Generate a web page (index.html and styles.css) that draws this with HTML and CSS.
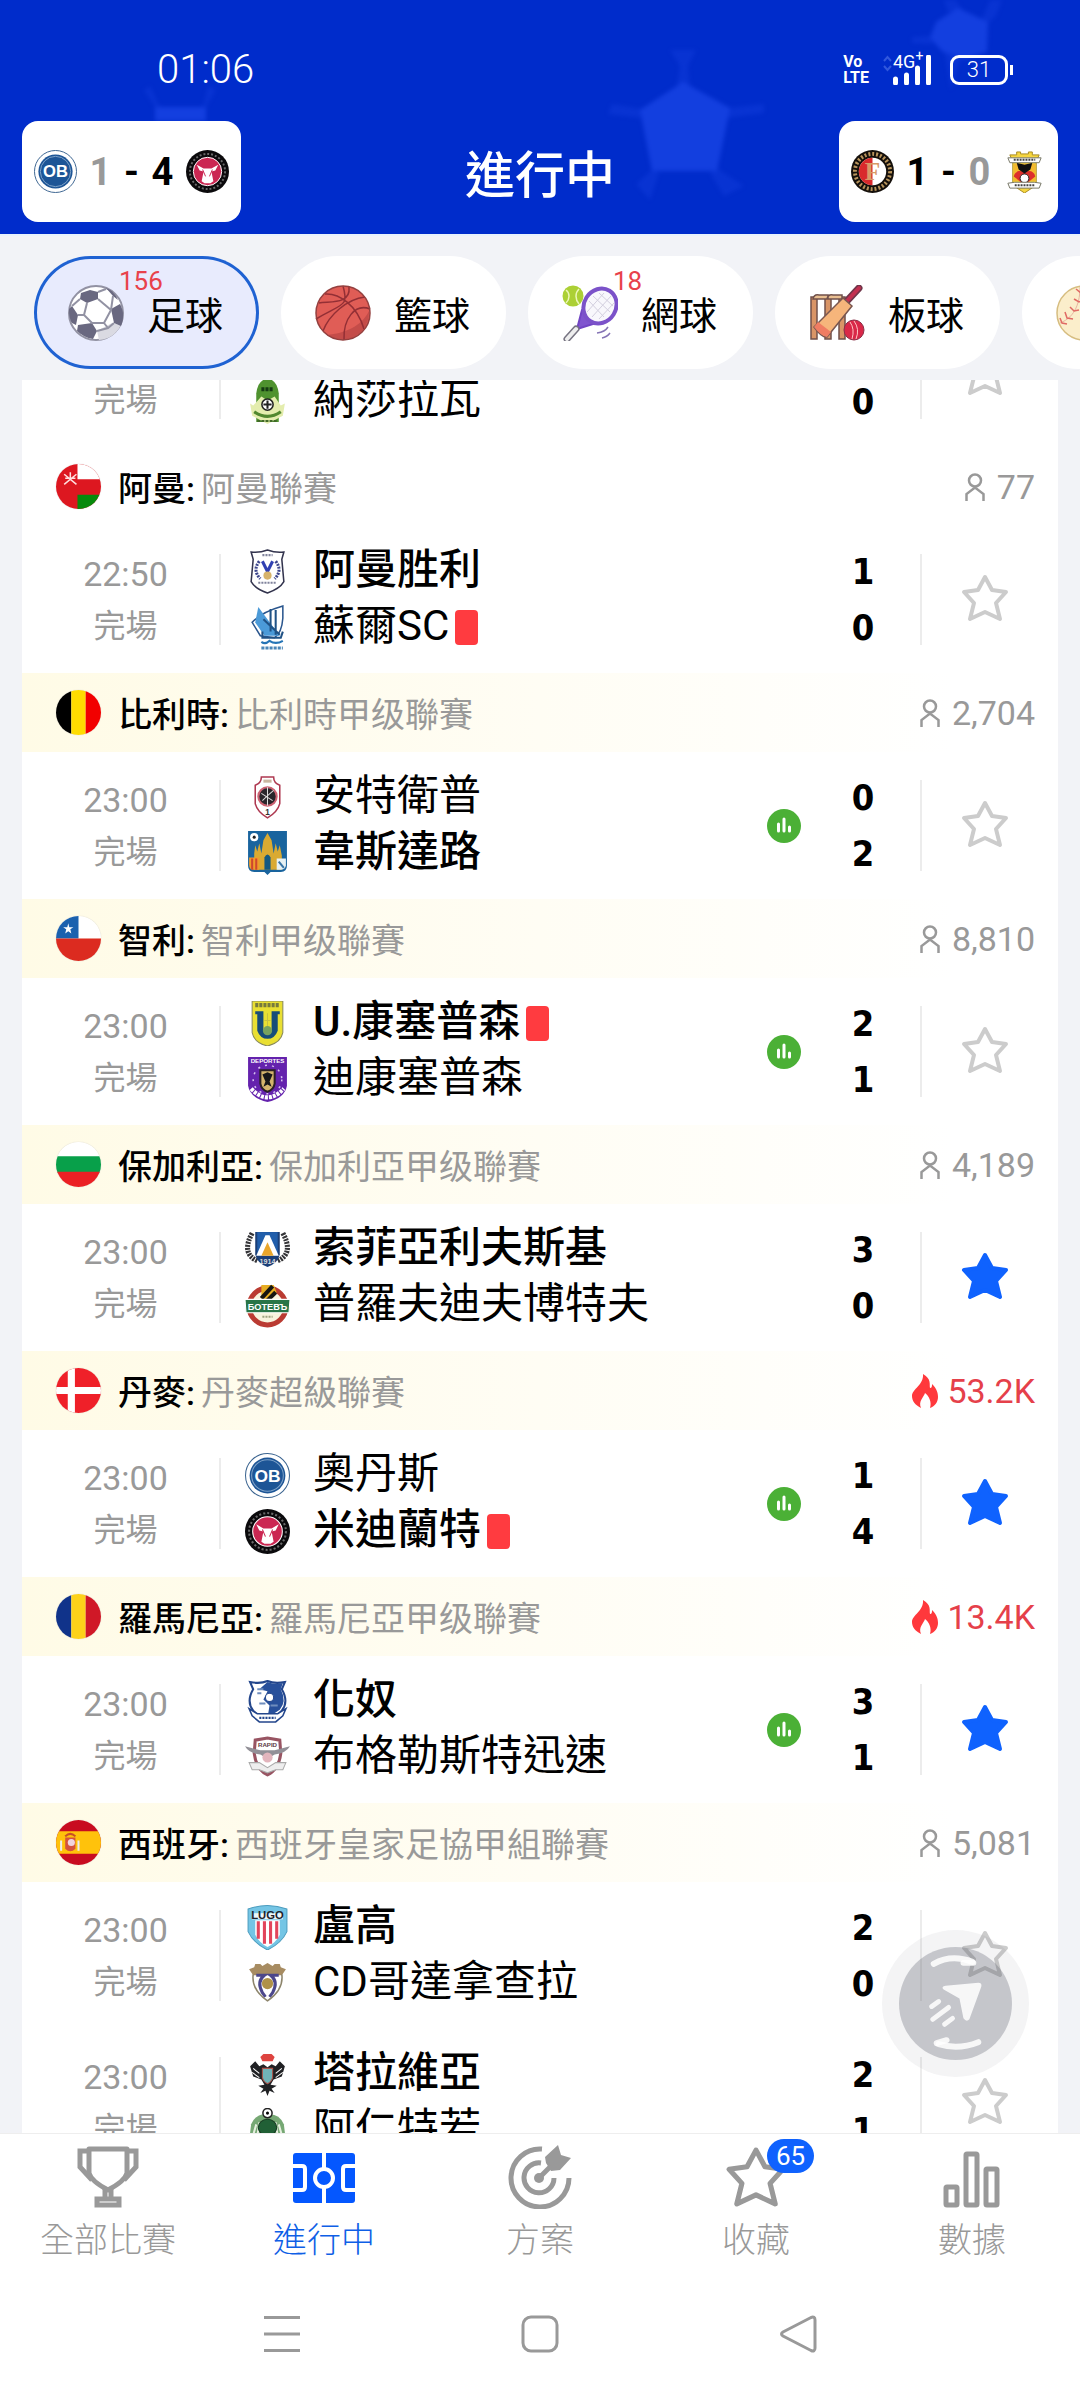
FILE: index.html
```html
<!DOCTYPE html>
<html lang="zh-Hant">
<head>
    <meta charset="UTF-8">
    <meta name="viewport" content="width=device-width, initial-scale=1.0">
    <title>進行中</title>
    <link rel="stylesheet" href="styles.css">
</head>
<body>
    <!-- shared icons -->
    <svg class="sprite" aria-hidden="true">
        <symbol id="star" viewBox="0 0 48 48"><path d="M24 3L31 16L45 18L35 29L39 45L24 38L9 45L13 29L3 18L17 16Z" stroke-width="4" stroke-linejoin="round"/></symbol>
        <symbol id="person" viewBox="0 0 20 28"><circle cx="10" cy="7.500" r="6" fill="none" stroke="#999" stroke-width="2.500"/><path d="M1.500 28V21L10 14.500L18.500 21V28" fill="none" stroke="#999" stroke-width="2.500"/></symbol>
        <symbol id="flame" viewBox="0 0 26 34"><path d="M11 0C20 5 17 11 18 14C20 14 20 12 20 10C25 15 26 19 26 23C26 28 23 32 18 34C20 28 17 22 13 19C12 23 6 27 9 34C3 31 0 27 0 22C0 15 12 11 11 0Z" fill="#ff383c"/></symbol>
        <symbol id="chart" viewBox="0 0 34 34"><circle cx="17" cy="17" r="17" fill="#4bb036"/><path d="M11.500 15V22M17 10V22M22.500 18V22" stroke="#fff" stroke-width="3" stroke-linecap="round"/></symbol>
        <symbol id="ob" viewBox="0 0 44 44"><circle cx="22" cy="22" r="21.500" fill="#fff" stroke="#3b6490"/><circle cx="22" cy="22" r="17.500" fill="#1d5596"/><circle cx="22" cy="22" r="15.500" fill="none" stroke="#7fa3c9" stroke-width="1"/><text x="22" y="28" font-size="17" class="crest-text" fill="#fff">OB</text></symbol>
        <symbol id="fcm" viewBox="0 0 44 44"><circle cx="22" cy="22" r="22" fill="#0b0a0c"/><circle cx="22" cy="22" r="18" fill="none" stroke="#aaa" stroke-width="2" stroke-dasharray="2 2" stroke-opacity=".6"/><circle cx="22" cy="22" r="14.500" fill="#cb2752" stroke="#fff"/><path d="M11 15L18 19H26L33 15L30 21L26 22L28 32L25 34H19L16 32L18 22L14 21Z" fill="#fff"/><path d="M17 20L20 27M27 20L24 27" stroke="#cb2752"/></symbol>
    </svg>

    <header class="header">
        <svg class="header-bg" viewBox="0 0 1080 234" preserveAspectRatio="xMidYMin slice" aria-hidden="true">
            <g fill="#1a45e6" fill-opacity=".75">
                <path d="M683 82L730 108L717 171H652L640 110Z"/>
                <path d="M958 8L988 22L987 52L965 59L943 52L930 38L936 22Z"/>
                <path d="M155 107H206V121H155Z"/>
            </g>
            <g fill="#1a45e6" fill-opacity=".3">
                <path d="M677 85L680 66L670 50H696L688 66L690 86ZM640 118L608 114L612 104L642 109ZM728 108L764 104V113L727 118ZM652 170L659 173L650 200L636 184ZM710 173L718 169L744 186L724 196Z"/>
                <path d="M948 12L944 0H956L962 10ZM982 19L990 0H1002L996 16L988 23ZM930 36L912 37V43L932 44ZM945 53L951 90L961 57Z"/>
                <path d="M155 107L144 90L150 86L160 107ZM203 107L208 86L216 90L206 107Z"/>
            </g>
        </svg>
        <div class="status-bar">
            <time class="clock">01:06</time>
            <div class="status-icons">
                <span class="volte">Vo<br>LTE</span>
                <span class="signal">
                    <span class="network">4G<sup>+</sup></span>
                    <svg width="49" height="30" viewBox="0 0 49 30" aria-hidden="true"><path d="M1 6L4.500 2L8 6M1 11L4.500 15L8 11" fill="none" stroke="#3158dd" stroke-width="2"/><path d="M12.500 24V28M23.500 20V28M34.500 13V28M45.500 2V28" stroke="#fff" stroke-width="5" stroke-linecap="round"/></svg>
                </span>
                <span class="battery">31</span>
            </div>
        </div>
        <div class="title-bar">
            <a class="mini-score" href="#odense">
                <svg class="mini-logo"><use href="#ob"/></svg>
                <span class="mini-lost">1</span><span>-</span><span>4</span>
                <svg class="mini-logo"><use href="#fcm"/></svg>
            </a>
            <h1 class="title">進行中</h1>
            <a class="mini-score" href="#feyenoord">
                <svg class="mini-logo" viewBox="0 0 44 44"><circle cx="22" cy="22" r="22" fill="#15100b"/><circle cx="22" cy="22" r="18" fill="none" stroke="#b8945c" stroke-width="4" stroke-dasharray="2 2"/><circle cx="22" cy="22" r="14" fill="#fff"/><path d="M22 8A14 14 0 0 0 22 36Z" fill="#d92a2c"/><text x="22" y="31" font-size="26" class="crest-serif" fill="#d79a67">F</text></svg>
                <span>1</span><span>-</span><span class="mini-lost">0</span>
                <svg class="mini-logo" viewBox="0 0 44 44"><path d="M7 5H14V2H18V4H26V2H30V5H37L34 12V36L22 44L10 36V12Z" fill="#f6d640" stroke="#a88a20"/><path d="M11 14H33V32H11Z" fill="#f4b92e"/><path d="M22 23C27 20 32 22 33 27L22 36L11 27C12 22 17 20 22 23Z" fill="#dd2f2c"/><path d="M22 15L30 13L28 20L22 24L16 20L14 13Z" fill="#111"/><circle cx="22" cy="29" r="4.500" fill="#fff" stroke="#222"/><path d="M5 8H39L37 13H7ZM5 34L12 33H32L39 34L37 39H7Z" fill="#fff" stroke="#776" stroke-width="1"/><path d="M12 36H32M11 10H33" stroke="#444" stroke-width="2" stroke-dasharray="2 1"/></svg>
            </a>
        </div>
    </header>

    <nav class="sports">
        <button class="sport sport-active">
            <svg class="sport-icon" viewBox="0 0 56 56" aria-hidden="true"><circle cx="28" cy="28" r="27" fill="#fff" stroke="#9292a3" stroke-width="2"/><path d="M31 55C42 54 48 49 53 40L44 38L29 46Z" fill="#dadae2"/><g fill="#696880"><path d="M13 8L22 5L30 7L30 14L19 18L12 14Z"/><path d="M1 24L4 21L10 30L8 40L4 38C1 33 1 28 1 24Z"/><path d="M10 40L24 38L29 46L25 54C19 53 13 50 9 46Z"/><path d="M43 24L52 19C56 26 56 34 53 41L46 38Z"/><path d="M38 3C44 5 48 10 50 15L45 11Z"/></g><path d="M19 18L16 30L24 38H36L43 25L30 14M30 7L38 4M10 30H16M36 38L40 43M43 25L45 11M12 14L4 21M29 46L40 43L46 38" fill="none" stroke="#9292a3" stroke-width="2"/></svg>
            <span class="sport-count">156</span>
            <span>足球</span>
        </button>
        <button class="sport">
            <svg class="sport-icon" viewBox="0 0 56 56" aria-hidden="true"><circle cx="28" cy="28" r="27" fill="#e05d56"/><path d="M54 26A27 27 0 0 1 12 50C30 48 46 42 54 26Z" fill="#c44c49"/><path d="M10 9C24 8 42 20 49 44M34 2C36 20 14 16 4 18M28 1C34 22 28 18 1 34M50 12C32 14 14 30 8 46M55 24C40 18 28 34 29 55" fill="none" stroke="#932f35" stroke-width="1.500"/><circle cx="28" cy="28" r="27" fill="none" stroke="#94403f" stroke-width="1.500"/></svg>
            <span>籃球</span>
        </button>
        <button class="sport">
            <svg class="sport-icon" viewBox="0 0 56 56" aria-hidden="true"><circle cx="11" cy="11" r="10.500" fill="#acd035"/><path d="M4 5C8 8 8 14 4 18M17 4C13 8 13 14 17 19" fill="none" stroke="#ecf7b8" stroke-width="1.500"/><path d="M20 25L15 44L34 38Z" fill="#8055cf" stroke="#7145c4" stroke-width="2" stroke-linejoin="round"/><ellipse cx="38" cy="21" rx="16" ry="18" transform="rotate(32 38 21)" fill="#f8f7fc" stroke="#7b52c9" stroke-width="4"/><path d="M27 16L42 32M31 11L48 27M37 8L51 21M25 27L42 8M30 32L49 11M37 34L52 18" stroke="#d3cfdf"/><path d="M14 44L5 54" stroke="#777482" stroke-width="7" stroke-linecap="round"/><path d="M14 44L5 54" stroke="#eee" stroke-width="4" stroke-linecap="round"/><path d="M35 48Q43 47 46 42M40 53Q45 52 48 48" fill="none" stroke="#8574b5" stroke-width="1.500"/></svg>
            <span class="sport-count">18</span>
            <span>網球</span>
        </button>
        <button class="sport">
            <svg class="sport-icon" viewBox="0 0 56 56" aria-hidden="true"><g fill="#d99567" stroke="#70504b" stroke-width="1.500"><path d="M2 12H8V54H2ZM16 12H22V54H16ZM30 12H36V54H30Z"/><path d="M4 14Q5 9 10 10H19V14ZM18 14Q19 9 24 10H33V14Z" fill="#e9bf91"/></g><path d="M37 17L50 3" stroke="#70364a" stroke-width="7" stroke-linecap="round"/><path d="M37 17L50 3" stroke="#c33050" stroke-width="4" stroke-linecap="round"/><path d="M34 13L43 21L18 52Q13 53 5 42Z" fill="#f6b57b" stroke="#7a5750" stroke-width="1.500"/><path d="M9 37L22 47L18 52Q12 51 5 42Z" fill="#f07c62"/><circle cx="45" cy="45" r="10" fill="#d92848" stroke="#8b3048"/><path d="M41 37Q46 44 43 54M45 36Q51 44 47 54" fill="none" stroke="#ffc5c5"/></svg>
            <span>板球</span>
        </button>
        <button class="sport" aria-label="棒球">
            <svg class="sport-icon" viewBox="0 0 56 56" aria-hidden="true"><circle cx="28" cy="28" r="27" fill="#fbeecb" stroke="#d6bd80" stroke-width="1.500"/><path d="M24 2C24 16 20 32 4 38M52 20C38 28 34 40 34 54" fill="none" stroke="#e9b5a0" stroke-width="1"/><path d="M20 4L25 8L28 5M18 14L23 17L27 15M14 22L18 26L23 25M9 27L11 33L17 34M4 33L6 38L11 39" fill="none" stroke="#e06a64" stroke-width="1.500"/></svg>
        </button>
    </nav>

    <main class="list">
        <div class="list-inner">
            <article class="match">
                <div class="when"><time>&nbsp;</time><span>完場</span></div>
                <div class="teams">
                    <div class="team"></div>
                    <div class="team">
                        <svg class="logo" viewBox="0 0 44 44"><path d="M11 42V14Q13 0 22 0T33 14V42Z" fill="#4f922f"/><path d="M16 10H28" stroke="#153b12" stroke-width="4" stroke-dasharray="3 1"/><path d="M8 26L5 24L7 36L22 44L37 36L39 24L35 26L29 17L22 21L16 17Z" fill="#e4edae"/><circle cx="22" cy="25" r="5.500" fill="#fff" stroke="#222" stroke-width="1.500"/><path d="M22 21V29M18 25H26" stroke="#222" stroke-width="2"/><path d="M9 32Q22 41 35 32" fill="none" stroke="#51882f" stroke-width="3"/><path d="M12 41H32" stroke="#416a27" stroke-width="2" stroke-dasharray="3 1"/></svg>
                        納莎拉瓦
                    </div>
                </div>
                <div class="score"><span>&nbsp;</span><span>0</span></div>
                <button class="fav" aria-label="收藏"><svg><use href="#star"/></svg></button>
            </article>

            <h2 class="league league-plain">
                <svg class="flag" viewBox="0 0 44 44"><path d="M0 0H44V44H0Z" fill="#dd1720"/><path d="M21 0H44V15H21Z" fill="#fff"/><path d="M21 30H44V44H21Z" fill="#078a0c"/><path d="M8 10L20 20M20 10L8 20M14 8V15M9 14H19" stroke="#ffdede" stroke-width="1.500"/></svg>
                <span class="country">阿曼:</span> <span class="league-name">阿曼聯賽</span>
                <span class="viewers"><svg class="person"><use href="#person"/></svg>77</span>
            </h2>
            <article class="match">
                <div class="when"><time>22:50</time><span>完場</span></div>
                <div class="teams">
                    <div class="team team-win">
                        <svg class="logo" viewBox="0 0 44 44"><path d="M6 3Q14 4 22 1Q30 4 38 3L36 10L38 32Q34 39 22 43Q10 39 6 32L8 10Z" fill="#fff" stroke="#33344e" stroke-width="1.500"/><path d="M17 12L22 22L27 12" fill="none" stroke="#3040b2" stroke-width="3"/><path d="M14 12Q7 21 15 29M30 12Q37 21 29 29" fill="none" stroke="#3c458c" stroke-width="3" stroke-dasharray="2 1"/><circle cx="22" cy="26" r="4" fill="#d7b36a"/><path d="M13 33H31M17 6H27" stroke="#80839c" stroke-width="2" stroke-dasharray="2 1"/></svg>
                        阿曼胜利
                    </div>
                    <div class="team">
                        <svg class="logo" viewBox="0 0 44 44"><path d="M37 1V13Q36 27 29 32L15 30L7 17Q16 7 37 1Z" fill="#fff" stroke="#2a568e" stroke-width="1.500"/><path d="M13 2L34 30H19L10 17Z" fill="#4b9ad8"/><path d="M25 4V26M18 14L34 29M30 5V29M17 26V32H35L37 26" stroke="#205285" stroke-width="2" fill="none"/><path d="M16 36Q20 39 24 35Q30 39 37 35" fill="none" stroke="#2474b6" stroke-width="2"/><path d="M16 42H37" stroke="#4a86b8" stroke-width="3" stroke-dasharray="3 1"/></svg>
                        蘇爾SC<i class="red-card"></i>
                    </div>
                </div>
                <div class="score"><span>1</span><span>0</span></div>
                <button class="fav" aria-label="收藏"><svg><use href="#star"/></svg></button>
            </article>

            <h2 class="league">
                <svg class="flag" viewBox="0 0 44 44"><path d="M0 0H15V44H0Z"/><path d="M15 0H29V44H15Z" fill="#ffdc00"/><path d="M29 0H44V44H29Z" fill="#f20000"/></svg>
                <span class="country">比利時:</span> <span class="league-name">比利時甲级聯賽</span>
                <span class="viewers"><svg class="person"><use href="#person"/></svg>2,704</span>
            </h2>
            <article class="match">
                <div class="when"><time>23:00</time><span>完場</span></div>
                <div class="teams">
                    <div class="team">
                        <svg class="logo" viewBox="0 0 44 44"><path d="M16 2H28Q28 8 34 10V28Q32 36 22 42Q12 36 10 28V10Q16 8 16 2Z" fill="#fff" stroke="#ae3850" stroke-width="1.500"/><circle cx="22" cy="21" r="9" fill="#29262b" stroke="#cb6272" stroke-width="2"/><path d="M16 18L27 25M17 25Q22 20 28 15M22 12V30" stroke="#ddd"/><text x="22" y="39" font-size="8" class="crest-text" fill="#333">1</text><path d="M18 6H26" stroke="#cbb6a0" stroke-width="3"/></svg>
                        安特衛普
                    </div>
                    <div class="team team-win">
                        <svg class="logo" viewBox="0 0 44 44"><path d="M3 0H41V34Q41 40 35 40H25L22 43L19 40H9Q3 40 3 34Z" fill="#19649e"/><path d="M9 38V22L10 14L12 20L14 12L16 22L18 9L22 2L26 9L28 22L30 12L32 20L34 14L36 24V38Z" fill="#d9aa32"/><path d="M19 38V26Q22 20 25 26V38Z" fill="#125982"/><path d="M4 26H14V38H7Q4 37 4 33Z" fill="#f09b2b"/><path d="M7 27V38M11 27V38" stroke="#cf472e" stroke-width="2"/><path d="M31 27H40V34Q39 38 35 38H31Z" fill="#e7f2f4"/><path d="M33 30L38 36" stroke="#3975a7" stroke-width="2"/><circle cx="9" cy="6" r="4" fill="#fff"/><circle cx="9" cy="6" r="1.500" fill="#222"/></svg>
                        韋斯達路
                    </div>
                </div>
                <svg class="stats"><use href="#chart"/></svg>
                <div class="score"><span>0</span><span>2</span></div>
                <button class="fav" aria-label="收藏"><svg><use href="#star"/></svg></button>
            </article>

            <h2 class="league">
                <svg class="flag" viewBox="0 0 44 44"><path d="M0 0H44V22H0Z" fill="#fff"/><path d="M0 0H22V22H0Z" fill="#1b61ae"/><path d="M0 22H44V44H0Z" fill="#dc2b20"/><path d="M12 7L13 11H17L14 13L15 17L12 15L9 17L10 13L7 11H11Z" fill="#fff"/></svg>
                <span class="country">智利:</span> <span class="league-name">智利甲级聯賽</span>
                <span class="viewers"><svg class="person"><use href="#person"/></svg>8,810</span>
            </h2>
            <article class="match">
                <div class="when"><time>23:00</time><span>完場</span></div>
                <div class="teams">
                    <div class="team team-win">
                        <svg class="logo" viewBox="0 0 44 44"><path d="M7 0H37V31Q35 41 22 44Q9 41 7 31Z" fill="#e9df32" stroke="#88895b"/><path d="M10 4H34" stroke="#777a3d" stroke-width="4" stroke-dasharray="3 1"/><path d="M10 10H18V28Q22 34 26 28V10H34V13H32V29Q29 37 22 37T12 29V13H10Z" fill="#174c78"/><path d="M22 12V25M19 19H25" stroke="#c7c13f"/><circle cx="22" cy="29" r="4.500" fill="#77a25e"/></svg>
                        U.康塞普森<i class="red-card"></i>
                    </div>
                    <div class="team">
                        <svg class="logo" viewBox="0 0 44 44"><path d="M3 0H41V28Q39 40 22 44Q5 40 3 28Z" fill="#6422ad"/><text x="22" y="6" font-size="6" class="crest-text" fill="#fff">DEPORTES</text><path d="M15 13H29V26Q28 32 22 34Q16 32 15 26Z" fill="#d3b46c" stroke="#2b2025" stroke-width="2"/><path d="M17 17L22 15L27 17L24 24L26 29L22 27L18 29L20 24Z" fill="#171719"/><circle cx="22" cy="22" r="14" fill="none" stroke="#d6c0f0" stroke-width="1.500" stroke-dasharray="2 5"/><path d="M6 31Q22 48 38 31" fill="none" stroke="#fff" stroke-width="4" stroke-dasharray="3 1"/></svg>
                        迪康塞普森
                    </div>
                </div>
                <svg class="stats"><use href="#chart"/></svg>
                <div class="score"><span>2</span><span>1</span></div>
                <button class="fav" aria-label="收藏"><svg><use href="#star"/></svg></button>
            </article>

            <h2 class="league">
                <svg class="flag" viewBox="0 0 44 44"><path d="M0 0H44V15H0Z" fill="#fff"/><path d="M0 14H44V30H0Z" fill="#08a04a"/><path d="M0 29H44V44H0Z" fill="#eb2024"/></svg>
                <span class="country">保加利亞:</span> <span class="league-name">保加利亞甲级聯賽</span>
                <span class="viewers"><svg class="person"><use href="#person"/></svg>4,189</span>
            </h2>
            <article class="match">
                <div class="when"><time>23:00</time><span>完場</span></div>
                <div class="teams">
                    <div class="team team-win">
                        <svg class="logo" viewBox="0 0 44 44"><path d="M7 6Q-4 26 12 33M37 6Q48 26 32 33" fill="none" stroke="#343437" stroke-width="5" stroke-dasharray="2 1"/><path d="M10 5H34V27Q32 36 22 39Q12 36 10 27Z" fill="#1a3f78"/><path d="M12 5H32V28H12Z" fill="#215eab"/><path d="M20 8H24L33 28H11Z" fill="#fff"/><path d="M22 15L28 28H16Z" fill="#e9a62c"/><text x="22" y="36" font-size="7" class="crest-text" fill="#ddd">1914</text></svg>
                        索菲亞利夫斯基
                    </div>
                    <div class="team">
                        <svg class="logo" viewBox="0 0 44 44"><circle cx="22" cy="23" r="18" fill="#f7f3dd" stroke="#ba3b32" stroke-width="5"/><path d="M16 2H28L31 9L22 18L16 15Z" fill="#e6ad22"/><path d="M16 15L27 3M21 18L30 9" stroke="#161612" stroke-width="4"/><path d="M0 16H44L43 29H1Z" fill="#287547" stroke="#fff"/><text x="22" y="26" font-size="9" class="crest-text" fill="#fff">БОТЕВЪ</text><path d="M17 33H27" stroke="#9da27f" stroke-width="2" stroke-dasharray="2 1"/></svg>
                        普羅夫迪夫博特夫
                    </div>
                </div>
                <div class="score"><span>3</span><span>0</span></div>
                <button class="fav fav-on" aria-label="收藏"><svg><use href="#star"/></svg></button>
            </article>

            <h2 class="league">
                <svg class="flag" viewBox="0 0 44 44"><path d="M0 0H44V44H0Z" fill="#ef2029"/><path d="M15 0V44M0 22H44" stroke="#fff" stroke-width="7"/></svg>
                <span class="country">丹麥:</span> <span class="league-name">丹麥超級聯賽</span>
                <span class="viewers viewers-hot"><svg class="flame"><use href="#flame"/></svg>53.2K</span>
            </h2>
            <article class="match" id="odense">
                <div class="when"><time>23:00</time><span>完場</span></div>
                <div class="teams">
                    <div class="team"><svg class="logo"><use href="#ob"/></svg>奧丹斯</div>
                    <div class="team team-win"><svg class="logo"><use href="#fcm"/></svg>米迪蘭特<i class="red-card"></i></div>
                </div>
                <svg class="stats"><use href="#chart"/></svg>
                <div class="score"><span>1</span><span>4</span></div>
                <button class="fav fav-on" aria-label="收藏"><svg><use href="#star"/></svg></button>
            </article>

            <h2 class="league">
                <svg class="flag" viewBox="0 0 44 44"><path d="M0 0H15V44H0Z" fill="#10338a"/><path d="M15 0H29V44H15Z" fill="#fdd21a"/><path d="M29 0H44V44H29Z" fill="#d01827"/></svg>
                <span class="country">羅馬尼亞:</span> <span class="league-name">羅馬尼亞甲级聯賽</span>
                <span class="viewers viewers-hot"><svg class="flame"><use href="#flame"/></svg>13.4K</span>
            </h2>
            <article class="match">
                <div class="when"><time>23:00</time><span>完場</span></div>
                <div class="teams">
                    <div class="team team-win">
                        <svg class="logo" viewBox="0 0 44 44"><path d="M5 3Q15 5 22 2Q29 5 39 3L36 10Q43 22 36 31Q31 37 22 40Q13 37 8 31Q1 22 8 10Z" fill="#fff" stroke="#23468c" stroke-width="2"/><path d="M22 3Q30 6 37 4L35 10Q41 22 34 30L22 38L24 26L18 20L22 12L14 10Z" fill="#28509b"/><circle cx="24" cy="18" r="4" fill="#fff" stroke="#23468c"/><path d="M12 10H18M12 14H16M14 24H20M25 26H32" stroke="#6f8dbd" stroke-width="2"/><path d="M4 29L12 34H32L40 29L37 36L30 42H14L7 36Z" fill="#fff" stroke="#23468c" stroke-width="1.500"/><path d="M14 38H30" stroke="#23468c" stroke-width="2" stroke-dasharray="2 1"/></svg>
                        化奴
                    </div>
                    <div class="team">
                        <svg class="logo" viewBox="0 0 44 44"><path d="M10 5L22 3L34 5L35 18Q33 34 22 39Q11 34 9 18Z" fill="#fff" stroke="#985462" stroke-width="3"/><text x="22" y="12" font-size="6" class="crest-text" fill="#5a3540">RAPID</text><path d="M0 11L15 15H29L44 11Q40 18 29 19L24 22H20L15 19Q4 18 0 11Z" fill="#929097"/><circle cx="22" cy="22" r="5" fill="#e3b5bd"/><path d="M4 27H14L22 32L30 27H40L37 34H30L22 37L14 34H7Z" fill="#eee" stroke="#aaa"/></svg>
                        布格勒斯特迅速
                    </div>
                </div>
                <svg class="stats"><use href="#chart"/></svg>
                <div class="score"><span>3</span><span>1</span></div>
                <button class="fav fav-on" aria-label="收藏"><svg><use href="#star"/></svg></button>
            </article>

            <h2 class="league">
                <svg class="flag" viewBox="0 0 44 44"><path d="M0 0H44V44H0Z" fill="#c80c20"/><path d="M0 11H44V33H0Z" fill="#ffc20b"/><path d="M9 17H19V28Q14 33 9 28Z" fill="#d4523e"/><circle cx="15" cy="22" r="3.500" fill="#f0d5de"/><path d="M5 20V30M22 20V30" stroke="#eee" stroke-width="2"/><path d="M9 16Q14 11 19 16" fill="none" stroke="#c94e25" stroke-width="2"/></svg>
                <span class="country">西班牙:</span> <span class="league-name">西班牙皇家足協甲組聯賽</span>
                <span class="viewers"><svg class="person"><use href="#person"/></svg>5,081</span>
            </h2>
            <article class="match">
                <div class="when"><time>23:00</time><span>完場</span></div>
                <div class="teams">
                    <div class="team team-win">
                        <svg class="logo" viewBox="0 0 44 44"><path d="M3 4Q22-3 41 4V26Q36 37 22 44Q8 37 3 26Z" fill="#74c5e5" stroke="#4c9dbf"/><path d="M7 8H37V14H7Z" fill="#eef8fb"/><path d="M10 15H34V29Q30 37 22 41Q14 37 10 29Z" fill="#fff"/><path d="M13 16V33M19 16V38M25 16V38M31 16V33" stroke="#e2455b" stroke-width="3"/><text x="22" y="14" font-size="11" class="crest-text" fill="#20222a">LUGO</text></svg>
                        盧高
                    </div>
                    <div class="team">
                        <svg class="logo" viewBox="0 0 44 44"><path d="M4 8L9 6L10 3H15L17 5L22 2L27 5L29 3H34L35 6L40 8L36 14H8Z" fill="#a78c62"/><path d="M11 14L19 14Q11 20 17 31L20 35M33 14L25 14Q33 20 27 31L24 35" fill="none" stroke="#4c478b" stroke-width="3"/><path d="M8 13Q6 28 22 39Q38 28 36 13" fill="none" stroke="#8d856c" stroke-width="1.500"/><circle cx="22" cy="22" r="5.500" fill="#af9148"/></svg>
                        CD哥達拿查拉
                    </div>
                </div>
                <div class="score"><span>2</span><span>0</span></div>
                <button class="fav" aria-label="收藏"><svg><use href="#star"/></svg></button>
            </article>
            <article class="match">
                <div class="when"><time>23:00</time><span>完場</span></div>
                <div class="teams">
                    <div class="team team-win">
                        <svg class="logo" viewBox="0 0 44 44"><path d="M15 5L18 2H26L29 5L27 9H17Z" fill="#de4440"/><path d="M18 12L22 15L26 12L30 14L34 9L39 14L36 24L28 27L25 32L31 33L26 36L29 40L24 38L22 43L20 38L15 40L18 36L13 33L19 32L16 27L8 24L5 14L10 9L14 14Z" fill="#202124"/><path d="M8 16L14 21M36 16L30 21M7 20L14 25M37 20L30 25" stroke="#fff"/><path d="M17 16H27V25Q26 29 22 31Q18 29 17 25Z" fill="#70b3b8" stroke="#ac554c"/></svg>
                        塔拉維亞
                    </div>
                    <div class="team">
                        <svg class="logo" viewBox="0 0 44 44"><path d="M6 16Q10 6 20 6H24Q34 6 38 16L40 32L22 42L4 32Z" fill="#76a874"/><path d="M11 16L7 30M33 16L37 30M14 14L12 28M30 14L32 28" stroke="#e7f0e0" stroke-width="2"/><ellipse cx="22" cy="19" rx="9" ry="8" fill="#216036" stroke="#173b22"/><circle cx="22" cy="5" r="4.500" fill="#fff" stroke="#222" stroke-width="1.500"/><circle cx="22" cy="5" r="1.500"/></svg>
                        阿仁特若
                    </div>
                </div>
                <div class="score"><span>2</span><span>1</span></div>
                <button class="fav" aria-label="收藏"><svg><use href="#star"/></svg></button>
            </article>
        </div>
        <button class="fab" aria-label="導航">
            <svg viewBox="0 0 114 114"><g fill="none" stroke="#fff" stroke-opacity=".85" stroke-linecap="round"><path d="M35 17Q53 7 74 15M40 98Q60 104 80 96" stroke-width="6"/><path d="M65 16L75 16M38 97L48 94" stroke-width="6"/><path d="M33 60L40 55M34 73L50 61M46 78L54 72" stroke-width="5"/></g><path d="M47 39L80 36Q84 36 83 40L71 73Q68 76 65 72L61 52L45 43Q42 40 47 39Z" fill="#fff" fill-opacity=".85"/></svg>
        </button>
    </main>

    <nav class="tabs">
        <a class="tab" href="#all">
            <svg class="tab-icon" viewBox="0 0 64 64" fill="none" stroke="#999" stroke-width="5"><path d="M13 4H51V28Q49 36 32 45Q15 36 13 28Z" stroke-linejoin="round"/><path d="M13 6H4V22L16 35M51 6H60V22L48 35M29 44V54M35 44V54"/><path d="M21 54H43V60H21Z"/></svg>
            <span>全部比賽</span>
        </a>
        <a class="tab tab-active" href="#live">
            <svg class="tab-icon" viewBox="0 0 64 64"><rect x="1" y="8" width="62" height="50" rx="3" fill="#0457ff"/><path d="M32 8V23M32 43V58M0 21H10Q13 21 13 24V42Q13 45 10 45H0M64 21H54Q51 21 51 24V42Q51 45 54 45H64" fill="none" stroke="#fff" stroke-width="4"/><circle cx="32" cy="33" r="9" fill="none" stroke="#fff" stroke-width="4"/></svg>
            <span>進行中</span>
        </a>
        <a class="tab" href="#plans">
            <svg class="tab-icon" viewBox="0 0 64 64" fill="none" stroke="#999" stroke-width="5"><path d="M34 4A29 29 0 1 0 61 33M33 18A15 15 0 1 0 46 33" /><circle cx="31" cy="33" r="5" fill="#999" stroke="none"/><path d="M31 33L46 18"/><path d="M38 18L37 12L50 0L53 10L63 13L52 25L43 26Z" fill="#999" stroke="none"/></svg>
            <span>方案</span>
        </a>
        <a class="tab" href="#favourites">
            <svg class="tab-icon" viewBox="-1 -1 50 50" fill="none" stroke="#999"><use href="#star" width="48" height="48"/></svg>
            <span class="badge">65</span>
            <span>收藏</span>
        </a>
        <a class="tab" href="#data">
            <svg class="tab-icon" viewBox="0 0 64 64" fill="none" stroke="#999" stroke-width="5"><rect x="6" y="42" width="11" height="18" rx="1"/><rect x="26" y="9" width="11" height="51" rx="1"/><rect x="46" y="24" width="11" height="36" rx="1"/></svg>
            <span>數據</span>
        </a>
    </nav>

    <div class="system-nav">
        <button aria-label="選單"><svg viewBox="0 0 38 38"><path d="M1 2.500H37M1 19H37M1 35.500H37"/></svg></button>
        <button aria-label="主畫面"><svg viewBox="0 0 38 38"><rect x="2" y="2" width="34" height="34" rx="8"/></svg></button>
        <button aria-label="返回"><svg viewBox="0 0 38 38"><path d="M32 2.500Q36 1 36 5V33Q36 37 32 35.500L4 21Q1 19 4 17Z"/></svg></button>
    </div>
</body>
</html>
```

FILE: styles.css
```css
* { box-sizing: border-box; }
body { margin: 0; height: 100vh; display: flex; flex-direction: column; background: #f2f3f7; color: #000; font-family: Roboto, "Noto Sans CJK TC", sans-serif; }
button { border: 0; margin: 0; padding: 0; background: none; font: inherit; color: inherit; }
a { color: inherit; text-decoration: none; }
svg { display: block; flex-shrink: 0; }
.sprite { display: none; }
.crest-text { font-family: "Liberation Sans", sans-serif; font-weight: bold; text-anchor: middle; }
.crest-serif { font-family: "Liberation Serif", serif; font-weight: bold; text-anchor: middle; }

/* header */
.header { position: relative; background: #002ccb; color: #fff; padding: 48px 22px 12px; border-bottom: 2px solid #e8f2fc; }
.header-bg { position: absolute; left: 0; top: 0; width: 100%; height: 100%; filter: blur(2px); }
.status-bar { position: relative; display: flex; justify-content: space-between; align-items: center; height: 43px; padding: 0 46px 0 135px; }
.clock { font-size: 40px; font-weight: 300; }
.status-icons { display: flex; align-items: center; }
.volte { font-size: 16px; line-height: 16px; font-weight: 700; margin-right: 14px; }
.signal { position: relative; margin-right: 18px; }
.network { position: absolute; left: 10px; top: -3px; font-size: 18px; line-height: 20px; }
.network sup { font-size: 14px; line-height: 0; }
.battery { position: relative; width: 58px; height: 30px; margin-right: 4px; border: 3px solid #fff; border-radius: 9px; font-size: 22px; line-height: 24px; font-weight: 300; text-align: center; }
.battery::after { content: ""; position: absolute; right: -8px; top: 7px; width: 3px; height: 10px; background: #fff; }
.title-bar { position: relative; display: flex; justify-content: space-between; align-items: center; padding-top: 30px; }
.title { margin: 0; padding-top: 8px; font-size: 50px; line-height: 70px; font-weight: 500; }
.mini-score { display: flex; align-items: center; justify-content: space-between; width: 219px; height: 101px; padding: 0 12px; border-radius: 16px; background: #fff; color: #000; font-size: 38px; font-weight: 700; }
.mini-logo { width: 43px; height: 43px; }
.mini-lost { color: #999; }

/* sport picker */
.sports { display: flex; gap: 22px; padding: 20px 0 11px 34px; overflow: hidden; }
.sport { position: relative; display: flex; flex-shrink: 0; align-items: center; gap: 23px; width: 225px; height: 113px; padding-left: 34px; border-radius: 57px; background: #fff; font-size: 38px; }
.sport-active { background: #e8ebfd; box-shadow: inset 0 0 0 3px #1f62d2; }
.sport-icon { width: 56px; height: 56px; }
.sport-count { position: absolute; left: 85px; top: 11px; font-size: 26px; line-height: 28px; color: #e8414b; }

/* match list */
.list { position: relative; flex: 1; min-height: 0; overflow: hidden; margin: 0 22px; background: #fff; }
.list-inner { margin-top: -80px; }
.league { display: flex; align-items: center; height: 79px; margin: 0; padding: 0 23px 0 34px; background: linear-gradient(90deg, #fffbe6, #fffdf4 50%, #fff 90%); font-size: 34px; font-weight: 400; }
.league-plain { background: #fff; }
.flag { width: 45px; height: 45px; margin-right: 17px; border-radius: 50%; box-shadow: 0 0 1px #bbb; }
.country { font-weight: 500; margin-right: 6px; }
.league-name { color: #999; }
.viewers { display: flex; align-items: center; gap: 12px; margin-left: auto; color: #999; }
.viewers-hot { gap: 9px; color: #e5404a; }
.person { width: 20px; height: 28px; }
.flame { width: 26px; height: 34px; }
.match { display: flex; align-items: center; height: 147px; }
.when { display: flex; flex-direction: column; align-items: center; width: 199px; padding-left: 10px; border-right: 2px solid #ececec; color: #999; font-size: 34px; line-height: 52px; height: 91px; justify-content: center; }
.when span { font-size: 32px; }
.teams { flex: 1; padding-left: 24px; }
.team { display: flex; align-items: flex-start; height: 56px; font-size: 42px; line-height: 51px; }
.team-win { font-weight: 500; }
.logo { align-self: center; width: 45px; height: 45px; margin-right: 23px; }
.red-card { align-self: center; width: 23px; height: 35px; margin-left: 6px; border-radius: 4px; background: #ff3b40; }
.stats { width: 34px; height: 34px; margin-right: 38px; }
.score { display: flex; flex-direction: column; align-items: center; width: 48px; margin-right: 33px; font-family: "DejaVu Sans Condensed", "DejaVu Sans", sans-serif; font-size: 36px; line-height: 56px; font-weight: 700; }
.fav { display: flex; align-items: center; justify-content: center; width: 138px; height: 91px; padding: 0 10px 4px 0; border-left: 2px solid #ececec; }
.fav svg { width: 48px; height: 48px; fill: none; stroke: #ccc; }
.fav-on svg { fill: #0f62fe; stroke: #0f62fe; }
.fab { position: absolute; right: 29px; bottom: 56px; width: 147px; height: 147px; padding: 17px; border-radius: 50%; background: rgba(60, 60, 80, .06); }
.fab svg { width: 113px; height: 113px; border-radius: 50%; background: rgba(90, 92, 105, .3); }

/* bottom bars */
.tabs { display: flex; height: 135px; padding-top: 11px; border-top: 1px solid #eee; background: #fff; }
.tab { position: relative; display: flex; flex: 1; flex-direction: column; align-items: center; gap: 5px; color: #999; font-size: 34px; font-weight: 300; line-height: 52px; }
.tab-active { color: #0f5fe6; }
.tab-icon { width: 64px; height: 64px; }
.badge { position: absolute; left: 119px; top: -6px; width: 47px; height: 34px; border-radius: 17px; background: #0f62fe; color: #fff; font-size: 26px; line-height: 34px; font-weight: 400; text-align: center; }
.system-nav { display: flex; justify-content: space-between; height: 132px; padding: 47px 263px 0; background: #fff; }
.system-nav button { width: 38px; height: 38px; }
.system-nav svg { width: 38px; height: 38px; fill: none; stroke: #999; stroke-width: 3; }
```
